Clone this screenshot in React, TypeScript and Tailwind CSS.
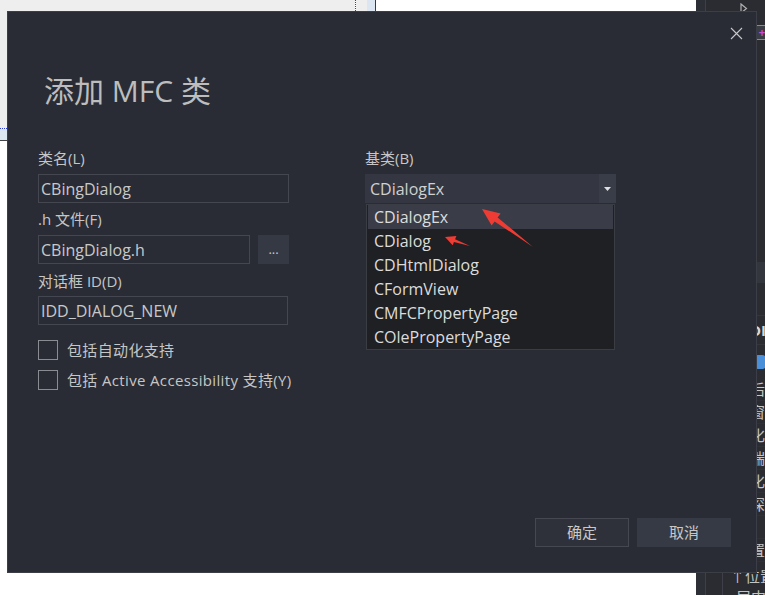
import React from "react";

const items = ["CDialogEx", "CDialog", "CDHtmlDialog", "CFormView", "CMFCPropertyPage", "COlePropertyPage"];
const sideChars = ["后", "窗", "化", "端", "化", "深", "·", "置"];

function Checkbox({ label }: { label: string }) {
  return (
    <div className="flex items-center gap-[9px] h-[20px] whitespace-nowrap">
      <div className="w-[20px] h-[20px] shrink-0 border border-[#8a8c92]" />
      <span className="text-[15px] leading-[20px] tracking-[0.35px] text-[#c6c6c6]">{label}</span>
    </div>
  );
}

export default function App() {
  return (
    <div className="relative w-[765px] h-[595px] overflow-hidden bg-white [font-family:'Open_Sans','Noto_Sans_CJK_SC',sans-serif]">
      {/* desktop background */}
      <div className="flex h-full">
        <div className="w-[376px] h-[141px] flex">
          <div className="w-[355px] h-full bg-[#eeeeee] flex flex-col justify-end">
            <div className="border-b border-dotted border-[#2a3cd8]" />
            <div className="h-[12px] bg-[#dde7f2] border-b border-[#444]" />
          </div>
          <div className="w-px h-full border-l border-dotted border-[#2a3cd8]" />
          <div className="w-[11px] h-full bg-[#eeeeee]" />
          <div className="w-[8px] h-full bg-[#dce6f2]" />
          <div className="w-px h-full bg-[#3a3a3a]" />
        </div>
        <div className="w-[320px] h-full bg-white" />
        <div className="w-[69px] h-full flex bg-[#2a2c32] overflow-hidden">
          <div className="w-[10px] h-full shrink-0 bg-[#2d2f36] border-r border-[#3d4048]" />
          <div className="flex-1 flex flex-col whitespace-nowrap">
            <div className="h-[20px] shrink-0 flex items-start pl-[34px] pt-[3px]">
              <svg width="8" height="11" viewBox="0 0 8 11">
                <path d="M1 1 L6.5 5.5 L1 10 Z" fill="none" stroke="#b0b0b0" strokeWidth="1.2" />
              </svg>
            </div>
            <div className="h-[25px] shrink-0 flex pl-[50px] pt-[5px]">
              <div className="w-[12px] h-[15px] border border-[#8b8b8b] bg-[#3b3d44] flex items-center justify-center text-[#c24dd6] text-[12px] leading-none font-bold">+</div>
            </div>
            <div className="h-[217px] shrink-0" />
            <div className="h-[21px] shrink-0 bg-[#34363d]" />
            <div className="h-[32px] shrink-0" />
            <div className="h-[30px] shrink-0 flex items-center pl-[44px] text-[15px] leading-none font-bold text-[#d8d8d8] border-y border-[#34363c]">DI</div>
            <div className="h-[33px] shrink-0 flex items-center pl-[48px]">
              <div className="w-[12px] h-[14px] rounded-sm bg-[#4a90d9]" />
            </div>
            {sideChars.map((c, i) => (
              <div key={i} className="h-[23px] shrink-0 flex items-center pl-[44px] text-[15px] leading-none text-[#c4c4c4] border-b border-[#2f3137]">
                {c}
              </div>
            ))}
            <div className="h-[3px] shrink-0" />
            <div className="h-[22px] shrink-0 flex items-center pl-[7px] text-[15px] leading-none text-[#c4c4c4] border-l border-[#3d4048] ml-[16px]">↑位置</div>
            <div className="h-[22px] shrink-0 flex items-start pt-[3px] pl-[13px] text-[15px] leading-none text-[#c4c4c4] border-l border-[#3d4048] ml-[16px]">居中</div>
          </div>
        </div>
      </div>

      {/* dialog window */}
      <div className="absolute left-[7px] top-[11px] w-[750px] h-[562px] bg-[#292c35] border border-[#3b3e46] flex flex-col">
        <div className="flex justify-end pt-[15px] pr-[13px]">
          <svg width="13" height="13" viewBox="0 0 13 13">
            <path d="M1 1 L12 12 M12 1 L1 12" stroke="#c8c8c8" strokeWidth="1.1" />
          </svg>
        </div>
        <div className="mt-[33px] pl-[36px] text-[30px] leading-[36px] text-[#bdbdbd]">添加 MFC 类</div>

        <div className="mt-[39px] pl-[30px] flex gap-[76px]">
          {/* left column */}
          <div className="w-[251px] flex flex-col">
            <div className="h-[20px] text-[15px] leading-[20px] text-[#c6c6c6]">类名(L)</div>
            <div className="mt-[6px] h-[29px] border border-[#444750] px-[2px] flex items-center text-[16px] text-[#c8c8c8]">CBingDialog</div>
            <div className="mt-[6px] h-[20px] text-[15px] leading-[20px] text-[#c6c6c6]">.h 文件(F)</div>
            <div className="mt-[6px] flex gap-[8px]">
              <div className="w-[212px] h-[29px] border border-[#444750] px-[2px] flex items-center text-[16px] text-[#c8c8c8]">CBingDialog.h</div>
              <div className="w-[31px] h-[29px] bg-[#353943] flex items-center justify-center text-[13px] text-[#c8c8c8]">...</div>
            </div>
            <div className="mt-[7px] h-[20px] text-[15px] leading-[20px] text-[#c6c6c6]">对话框 ID(D)</div>
            <div className="mt-[5px] w-[250px] h-[29px] border border-[#444750] px-[2px] flex items-center text-[16px] text-[#c8c8c8]">IDD_DIALOG_NEW</div>
            <div className="mt-[15px]">
              <Checkbox label="包括自动化支持" />
            </div>
            <div className="mt-[10px]">
              <Checkbox label="包括 Active Accessibility 支持(Y)" />
            </div>
          </div>

          {/* right column */}
          <div className="w-[251px] flex flex-col">
            <div className="h-[20px] text-[15px] leading-[20px] text-[#c6c6c6]">基类(B)</div>
            <div className="relative mt-[6px]">
              <div className="h-[29px] bg-[#343741] flex items-center">
                <div className="flex-1 pl-[5px] text-[16px] text-[#d0d0d0]">CDialogEx</div>
                <div className="w-[17px] h-full bg-[#393d47] flex items-center justify-center">
                  <svg width="7" height="4" viewBox="0 0 7 4">
                    <path d="M0 0 L7 0 L3.5 4 Z" fill="#e0e0e0" />
                  </svg>
                </div>
              </div>
              {/* open dropdown list */}
              <div className="absolute left-[1px] top-[30px] w-[249px] bg-[#1f2023] border border-[#3b3d44] px-[1px] flex flex-col">
                {items.map((it, i) => (
                  <div
                    key={it}
                    className={
                      i === 0
                        ? "h-[24px] pl-[6px] flex items-center text-[16px] text-[#dcdcdc] bg-[#3a3d47]"
                        : "h-[24px] pl-[6px] flex items-center text-[16px] text-[#dcdcdc]"
                    }
                  >
                    {it}
                  </div>
                ))}
              </div>
            </div>
          </div>
        </div>

        <div className="mt-auto pb-[25px] pr-[25px] flex justify-end gap-[8px]">
          <div className="w-[94px] h-[29px] bg-[#2e313a] border border-[#454851] flex items-center justify-center text-[15px] text-[#c8c8c8]">确定</div>
          <div className="w-[94px] h-[29px] bg-[#363a44] flex items-center justify-center text-[15px] text-[#c8c8c8]">取消</div>
        </div>
      </div>

      {/* red annotation arrows */}
      <svg className="absolute left-0 top-0 pointer-events-none" width="765" height="595" viewBox="0 0 765 595">
        <polygon
          points="533,247 497.6,217.4 500.6,213.6 482,209 491.6,225.4 494.6,221.4"
          fill="#ee3b34"
        />
        <polygon
          points="470,246 455.1,239.2 456.4,235.9 445,237 452.7,245.2 453.9,241.9"
          fill="#ee3b34"
        />
      </svg>
    </div>
  );
}
